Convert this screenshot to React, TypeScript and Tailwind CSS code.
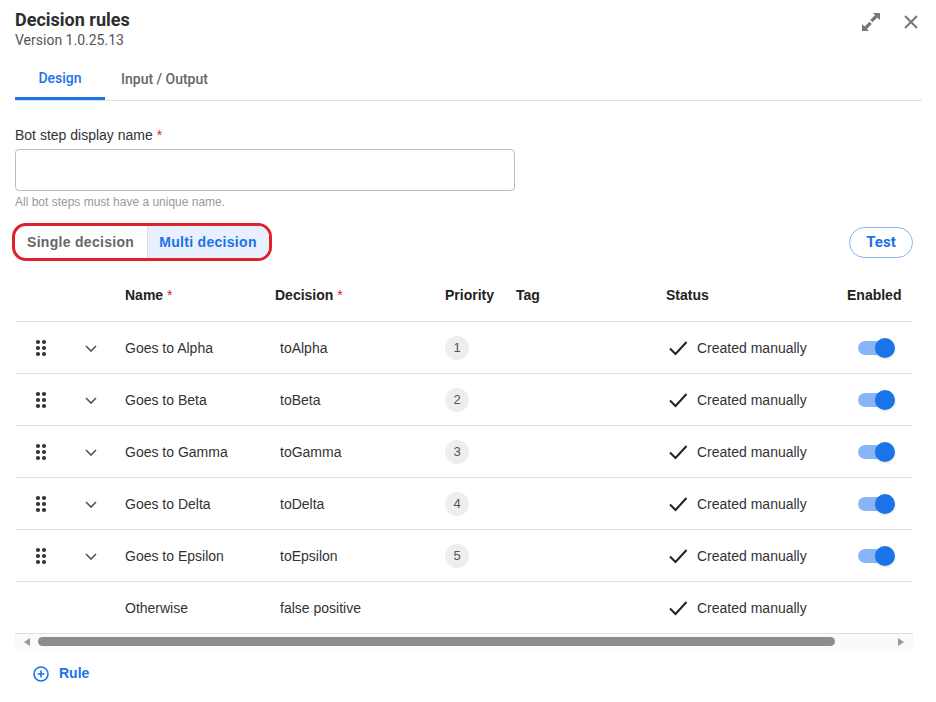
import React from 'react';

const rules = [
  { name: 'Goes to Alpha', decision: 'toAlpha', priority: 1 },
  { name: 'Goes to Beta', decision: 'toBeta', priority: 2 },
  { name: 'Goes to Gamma', decision: 'toGamma', priority: 3 },
  { name: 'Goes to Delta', decision: 'toDelta', priority: 4 },
  { name: 'Goes to Epsilon', decision: 'toEpsilon', priority: 5 },
];

const cols = 'grid grid-cols-[50px_45px_150px_170px_71px_150px_181px_81px]';

const DragHandle = () => (
  <svg width="12" height="18" viewBox="0 0 12 18" fill="#333">
    <circle cx="3" cy="3" r="2.1" />
    <circle cx="9" cy="3" r="2.1" />
    <circle cx="3" cy="9" r="2.1" />
    <circle cx="9" cy="9" r="2.1" />
    <circle cx="3" cy="15" r="2.1" />
    <circle cx="9" cy="15" r="2.1" />
  </svg>
);

const Chevron = () => (
  <svg width="14" height="10" viewBox="0 0 14 10" fill="none" stroke="#555" strokeWidth="1.6">
    <path d="M2 3l5 5 5-5" />
  </svg>
);

const Check = () => (
  <svg width="20" height="16" viewBox="0 0 20 16" fill="none" stroke="#222" strokeWidth="2">
    <path d="M2 8.5l5.5 5.5L18.5 2" />
  </svg>
);

const Toggle = () => (
  <div className="relative w-[37px] h-[20px] flex items-center">
    <div className="w-[34px] h-[14px] rounded-full bg-[#8ab4f8]" />
    <div className="absolute right-0 w-[20px] h-[20px] rounded-full bg-[#1a73e8] shadow" />
  </div>
);

const Status = () => (
  <div className="flex items-center gap-[9px] pl-[17px]">
    <Check />
    <span>Created manually</span>
  </div>
);

export default function App() {
  return (
    <div className="w-[936px] h-[702px] bg-white text-[#333] font-['Liberation_Sans',Arial,sans-serif] text-[14px] relative overflow-hidden">
      {/* header */}
      <div className="flex items-start justify-between pl-[15px] pr-[17px] pt-[9px]">
        <div className="font-['Roboto',sans-serif]">
          <div className="text-[18px] font-bold leading-[22px] text-[#2d2d2d]">Decision rules</div>
          <div className="text-[14px] leading-[18px] text-[#555]">Version 1.0.25.13</div>
        </div>
        <div className="flex items-center gap-[22px] pt-[3px]">
          <svg width="20" height="20" viewBox="0 0 20 20" fill="#777">
            <path d="M12 1h7v7l-2.6-2.6-4.9 4.9-2.3-2.3 4.9-4.9z" />
            <path d="M8 19H1v-7l2.6 2.6 4.9-4.9 2.3 2.3-4.9 4.9z" />
          </svg>
          <svg width="16" height="16" viewBox="0 0 16 16" fill="none" stroke="#777" strokeWidth="2">
            <path d="M2 2l12 12M14 2L2 14" />
          </svg>
        </div>
      </div>

      {/* tabs */}
      <div className="mx-[15px] mt-[10px] mr-[14px] flex border-b border-[#e0e0e0] font-['Roboto',sans-serif] font-medium text-[14px]">
        <div className="w-[90px] h-[41px] flex items-center justify-center text-[#1a73e8] border-b-[3px] border-[#1a73e8] -mb-px">
          Design
        </div>
        <div className="px-[16px] h-[41px] flex items-center text-[#666]">Input / Output</div>
      </div>

      {/* form */}
      <div className="px-[15px] pt-[26px]">
        <div className="leading-[16px]">
          Bot step display name <span className="text-[#e0202a]">*</span>
        </div>
        <div className="mt-[6px] w-[500px] h-[42px] border border-[#bdbdbd] rounded-[4px]" />
        <div className="mt-[4px] text-[12px] text-[#999] leading-[14px]">All bot steps must have a unique name.</div>
      </div>

      {/* mode row */}
      <div className="flex items-center justify-between pl-[12px] pr-[23px] mt-[14px]">
        <div className="border-[3px] border-[#e0202a] rounded-[14px] flex overflow-hidden h-[38px] font-bold tracking-[0.3px]">
          <div className="pl-[12px] pr-[13px] flex items-center text-[#666] border-r border-[#d8dde6]">Single decision</div>
          <div className="pl-[11px] pr-[12px] flex items-center text-[#1a73e8] bg-[#e8f0fe]">Multi decision</div>
        </div>
        <button className="w-[64px] h-[31px] rounded-full border border-[#8ab4f8] text-[#1a73e8] font-bold font-['Roboto',sans-serif] text-[15px]">
          Test
        </button>
      </div>

      {/* table */}
      <div className="ml-[15px] w-[898px] mt-[8px]">
        <div className={`${cols} h-[53px] items-center font-bold text-[#222] border-b border-[#e0e0e0]`}>
          <div />
          <div />
          <div className="pl-[15px]">
            Name <span className="text-[#e0202a] font-normal">*</span>
          </div>
          <div className="pl-[15px]">
            Decision <span className="text-[#e0202a] font-normal">*</span>
          </div>
          <div className="pl-[15px]">Priority</div>
          <div className="pl-[15px]">Tag</div>
          <div className="pl-[15px]">Status</div>
          <div className="pl-[15px]">Enabled</div>
        </div>
        {rules.map((r) => (
          <div key={r.name} className={`${cols} h-[52px] pt-[1px] items-center border-b border-[#e0e0e0]`}>
            <div className="flex justify-center pl-[1px]">
              <DragHandle />
            </div>
            <div className="flex justify-center pl-[7px]">
              <Chevron />
            </div>
            <div className="pl-[15px]">{r.name}</div>
            <div className="pl-[20px]">{r.decision}</div>
            <div className="pl-[15px]">
              <div className="w-[24px] h-[24px] rounded-full bg-[#eeeeee] flex items-center justify-center text-[13px] text-[#555]">
                {r.priority}
              </div>
            </div>
            <div />
            <Status />
            <div className="pl-[26px]">
              <Toggle />
            </div>
          </div>
        ))}
        <div className={`${cols} h-[52px] pt-[1px] items-center border-b border-[#e0e0e0]`}>
          <div />
          <div />
          <div className="pl-[15px]">Otherwise</div>
          <div className="pl-[20px]">false positive</div>
          <div />
          <div />
          <Status />
          <div />
        </div>
        {/* scrollbar */}
        <div className="h-[15px] bg-[#fafafa] flex items-center px-[9px] gap-[8px]">
          <svg width="6" height="8" viewBox="0 0 6 8" fill="#999">
            <path d="M6 0v8L0 4z" />
          </svg>
          <div className="w-[797px] h-[9px] rounded-full bg-[#8c8c8c]" />
          <div className="flex-1" />
          <svg width="6" height="8" viewBox="0 0 6 8" fill="#999">
            <path d="M0 0v8l6-4z" />
          </svg>
        </div>
      </div>

      {/* add rule */}
      <div className="flex items-center gap-[10px] pl-[33px] mt-[14px] text-[#1a73e8] font-bold">
        <svg width="16" height="16" viewBox="0 0 16 16" fill="none" stroke="#1a73e8" strokeWidth="1.6">
          <circle cx="8" cy="8" r="7" />
          <path d="M8 4.5v7M4.5 8h7" />
        </svg>
        <span>Rule</span>
      </div>
    </div>
  );
}
